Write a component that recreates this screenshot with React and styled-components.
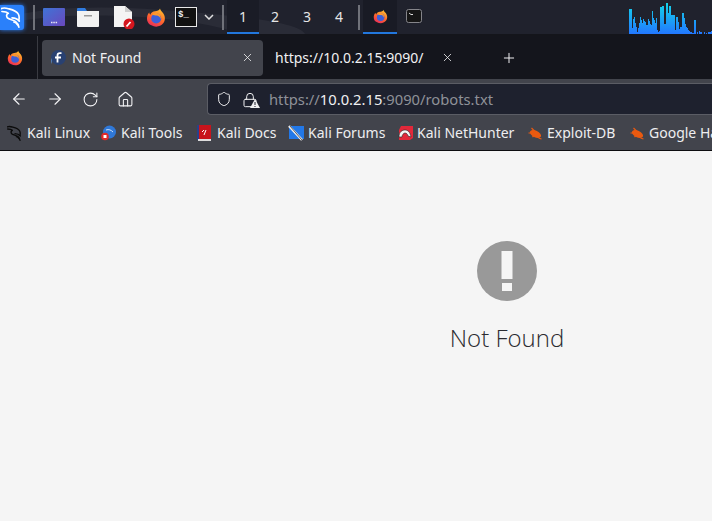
import styled, { createGlobalStyle } from 'styled-components';
import { ArrowLeft, ArrowRight, RotateCw, House, Shield, Lock, X, Plus } from 'lucide-react';

const GlobalStyle = createGlobalStyle`
  html, body {
    margin: 0;
    padding: 0;
    height: 100%;
    overflow: hidden;
    background: #f5f5f5;
  }
  #root { height: 100%; }
`;

const Screen = styled.div`
  width: 712px;
  height: 521px;
  display: flex;
  flex-direction: column;
  overflow: hidden;
  font-family: "Noto Sans", "Open Sans", sans-serif;
`;

/* ---- desktop panel ---- */
const Panel = styled.div`
  position: relative;
  flex: none;
  height: 34px;
  display: flex;
  align-items: center;
  background: #20222d;
  border-bottom: 2px solid #14151b;
`;

const Swoosh = styled.svg`
  position: absolute;
  left: 0;
  top: 0;
  pointer-events: none;
`;

const PanelItems = styled.div`
  position: relative;
  display: flex;
  align-items: center;
  height: 100%;
  width: 100%;
`;

const StartButton = styled.div`
  width: 24px;
  height: 25px;
  margin: 0 8px 0 0;
  display: flex;
  align-items: center;
  justify-content: center;
  border-radius: 0 3px 3px 0;
  background: #2a80fa;
  box-shadow: 0 0 4px #2a80fa;
`;

const Separator = styled.div`
  flex: none;
  width: 2px;
  height: 25px;
  margin: ${p => p.$margin};
  background: #70727a;
`;

const Launcher = styled.div`
  flex: none;
  width: ${p => p.$w}px;
  margin-left: ${p => p.$ml}px;
  display: flex;
  justify-content: center;
`;

const Desk = styled.div`
  flex: none;
  width: 32px;
  height: 34px;
  box-sizing: border-box;
  display: flex;
  align-items: center;
  justify-content: center;
  font-size: 14px;
  color: #e6e6e6;
  background: ${p => (p.$active ? '#1a1c26' : 'transparent')};
  border-bottom: 2px solid ${p => (p.$active ? '#2277dd' : 'transparent')};
`;

const TaskButton = styled.div`
  flex: none;
  width: ${p => p.$w}px;
  height: 34px;
  box-sizing: border-box;
  display: flex;
  align-items: center;
  justify-content: center;
  background: ${p => (p.$active ? '#191b25' : 'transparent')};
  border-bottom: 2px solid ${p => (p.$active ? '#2277dd' : 'transparent')};
`;

const Graph = styled.svg`
  position: absolute;
  right: 0;
  bottom: 0;
`;

/* ---- browser ---- */
const TabStrip = styled.div`
  position: relative;
  flex: none;
  height: 43px;
  display: flex;
  align-items: center;
  background: #14151c;
`;

const AppMenu = styled.div`
  flex: none;
  width: 30px;
  height: 100%;
  padding-left: 7px;
  display: flex;
  align-items: center;
  border-right: 1px solid #3a3b42;
`;

const Tab = styled.div`
  flex: none;
  width: ${p => p.$w}px;
  height: 36px;
  margin-left: ${p => p.$ml}px;
  box-sizing: border-box;
  padding: 0 9px 0 ${p => p.$pl}px;
  display: flex;
  align-items: center;
  border-radius: 4px;
  background: ${p => (p.$active ? '#42444c' : 'transparent')};
  color: #f0f0f2;
  font-size: 14px;
`;

const TabTitle = styled.span`
  flex: 1;
  margin-left: ${p => p.$ml}px;
  white-space: nowrap;
`;

const NewTab = styled.div`
  flex: none;
  margin-left: 32px;
  width: 28px;
  display: flex;
  justify-content: center;
  color: #f0f0f2;
`;

const NavBar = styled.div`
  flex: none;
  height: 36px;
  display: flex;
  align-items: flex-end;
  background: #42444c;
`;

const NavButtons = styled.div`
  flex: none;
  width: 207px;
  height: 32px;
  box-sizing: border-box;
  padding-left: 10px;
  display: flex;
  gap: 18px;
  align-items: center;
  color: #f4f4f6;
`;

const UrlBar = styled.div`
  flex: 1;
  height: 32px;
  box-sizing: border-box;
  display: flex;
  align-items: center;
  padding-left: 8px;
  border: 1px solid #5b5d65;
  border-right: none;
  border-radius: 4px 0 0 4px;
  background: #1e212e;
  color: #f0f0f2;
`;

const SecurityIcons = styled.div`
  display: flex;
  align-items: center;
  gap: 10px;
  margin-right: 11px;
`;

const LockWrap = styled.div`
  position: relative;
  width: 16px;
  height: 16px;
`;

const Warn = styled.svg`
  position: absolute;
  right: -2px;
  bottom: -1px;
`;

const UrlText = styled.span`
  font-size: 14.75px;
  color: #8f9198;
  white-space: nowrap;
`;

const UrlHost = styled.span`
  color: #f0f0f2;
`;

const Bookmarks = styled.div`
  flex: none;
  height: 35px;
  display: flex;
  align-items: center;
  padding-left: 7px;
  background: #42444c;
  border-bottom: 1px solid #0d0d10;
  white-space: nowrap;
  overflow: hidden;
`;

const Bookmark = styled.div`
  flex: none;
  width: ${p => p.$w}px;
  display: flex;
  align-items: center;
  gap: 4px;
  font-size: 14px;
  color: #eeeef0;
`;

const Content = styled.div`
  flex: 1;
  width: 1014px;
  background: #f5f5f5;
  display: flex;
  flex-direction: column;
  align-items: center;
  padding-top: 90px;
`;

const Message = styled.div`
  margin-top: 21px;
  font-family: "Open Sans", "Noto Sans", sans-serif;
  font-weight: 300;
  font-size: 24px;
  line-height: 32px;
  color: #2b2b30;
`;

/* ---- drawn icons ---- */
const Firefox = ({ size = 20 }) => (
  <svg width={size} height={size} viewBox="0 0 20 20">
    <defs>
      <linearGradient id="ffBody" x1="0.7" y1="0" x2="0.2" y2="1">
        <stop offset="0" stopColor="#ffc02e" />
        <stop offset="0.5" stopColor="#ff6a2a" />
        <stop offset="1" stopColor="#e8265e" />
      </linearGradient>
    </defs>
    <path d="M14 1c.4 1.8 1.5 2.6 3 4.4 2.4 3 2.6 7.4.2 10.4-2.8 3.6-8 4.3-11.8 2C2 16.600.4 12.800 1.200 9 1.500 7.400 2.300 6 3.300 5c0 1 .4 1.700 1 2.200C5 5 7 4 9 3.800 11 3.500 13.500 3 14 1z" fill="url(#ffBody)" />
    <circle cx="10.200" cy="11" r="5" fill="#3d5fd8" />
    <path d="M6 6.500c2-1.500 5-1.500 7 .2 1.500 1.300 2 3 1.600 5-.4-2-1.700-3.400-3.600-3.700-1.500-.2-3.500.2-5-1.500z" fill="#ff9a2a" />
  </svg>
);

const KaliDragon = ({ size = 20, color = '#fff', width = 1.8 }) => (
  <svg width={size} height={size} viewBox="0 0 24 24" fill="none" stroke={color} strokeWidth={width} strokeLinecap="round" strokeLinejoin="round">
    <path d="M0 3c2-1 5-1 8 0 4 1 9 2 11 6 1 2 1 4 .5 6" />
    <path d="M1 6c2 0 5 0 7 2-2 1-2.500 3-1 5 2 2 6 2 9 4 2 1.500 3 3.500 3.500 6" />
    <path d="M12 13c3 0 6 1 8 3.500" />
    <path d="M14 17.500c2 .5 3 1.500 4 3" />
  </svg>
);

const BugIcon = () => (
  <svg width="16" height="16" viewBox="0 0 15 16">
    <ellipse cx="8" cy="9" rx="6" ry="3.300" transform="rotate(25 8 9)" fill="#ea5a10" />
    <path d="M1 8h5M4 3l4 4M11 13l3 1M5 12l2-2" stroke="#ea5a10" strokeWidth="1.200" />
  </svg>
);

const BARS = [25,25,25,6,15,17,11,7,2,6,11,17,14,11,15,13,12,9,9,15,13,10,9,23,16,14,11,16,4,2,3,27,27,28,28,10,10,31,31,21,28,28,19,19,19,19,4,17,17,12,5,7,7,21,21,16,10,7,6,4,3,2,2,1,1,14,14,0,2,0,3,2,2,0,0,2,0,1,0,2,2,2,3];

export default function App() {
  return (
    <Screen>
      <GlobalStyle />
      <Panel>
        <Swoosh width="712" height="34">
          <path d="M0 18 C60 4 120 6 190 12 S300 24 305 34 L240 34 C220 26 180 18 120 16 S40 18 0 24z" fill="#2a2c37" />
        </Swoosh>
        <PanelItems>
          <StartButton>
            <KaliDragon size={22} />
          </StartButton>
          <Separator $margin="0 0 0 1px" />
          <Launcher $w={22} $ml={8}>
            <svg width="22" height="18" viewBox="0 0 22 18">
              <defs>
                <linearGradient id="deskBg" x1="0" y1="0" x2="1" y2="1">
                  <stop offset="0" stopColor="#3f74d6" />
                  <stop offset="1" stopColor="#6a48bd" />
                </linearGradient>
              </defs>
              <rect width="22" height="18" rx="1" fill="url(#deskBg)" />
              <path d="M8 14.500h1.500M10.300 14.500h1.500M12.600 14.500h1.500" stroke="#e8e8f4" strokeWidth="1.500" />
            </svg>
          </Launcher>
          <Launcher $w={22} $ml={12}>
            <svg width="22" height="20" viewBox="0 0 22 20">
              <path d="M0 2q0-1 1-1h7l2 3H0z" fill="#2f7be0" />
              <path d="M0 4h22v15q0 1-1 1H1q-1 0-1-1z" fill="#f2f2f2" />
              <rect x="7" y="8" width="8" height="1.500" fill="#9a9a9a" />
            </svg>
          </Launcher>
          <Launcher $w={22} $ml={14}>
            <svg width="22" height="23" viewBox="0 0 22 23">
              <path d="M1 0h11l7 6v15H1z" fill="#f4f4f4" />
              <path d="M12 0l7 6h-7z" fill="#cfcfcf" />
              <circle cx="16" cy="18" r="5.500" fill="#d4161e" />
              <path d="M13.500 20.500l4-4.500" stroke="#fff" strokeWidth="1.800" />
            </svg>
          </Launcher>
          <Launcher $w={20} $ml={11}>
            <Firefox size={21} />
          </Launcher>
          <Launcher $w={22} $ml={9}>
            <svg width="22" height="20" viewBox="0 0 22 20">
              <rect x="0.500" y="0.500" width="21" height="19" fill="#111" stroke="#e8e8e8" />
              <text x="3" y="10" fontSize="9" fontWeight="700" fontFamily="Liberation Mono, monospace" fill="#eee">$_</text>
            </svg>
          </Launcher>
          <Launcher $w={12} $ml={6}>
            <svg width="10" height="6" viewBox="0 0 10 6" fill="none" stroke="#e0e0e0" strokeWidth="1.500">
              <path d="M1 1l4 4 4-4" />
            </svg>
          </Launcher>
          <Separator $margin="0 3px 0 7px" />
          <Desk $active>1</Desk>
          <Desk>2</Desk>
          <Desk>3</Desk>
          <Desk>4</Desk>
          <Separator $margin="0 3px 0 3px" />
          <TaskButton $active $w={34}>
            <Firefox size={15} />
          </TaskButton>
          <TaskButton $w={34}>
            <svg width="16" height="14" viewBox="0 0 16 14">
              <rect x="0.500" y="0.500" width="15" height="13" rx="2" fill="#161616" stroke="#85858a" />
              <path d="M3 4l2 1.500h2" stroke="#ddd" fill="none" />
            </svg>
          </TaskButton>
        </PanelItems>
        <Graph width="83" height="34" viewBox="0 0 83 34">
          <defs>
            <linearGradient id="barFill" gradientUnits="userSpaceOnUse" x1="0" y1="34" x2="0" y2="4">
              <stop offset="0" stopColor="#2277ff" />
              <stop offset="1" stopColor="#14d2ea" />
            </linearGradient>
          </defs>
          {BARS.map((h, i) => (
            <rect key={i} x={i} y={34 - h} width="1" height={h} fill="url(#barFill)" />
          ))}
        </Graph>
      </Panel>

      <TabStrip>
        <AppMenu>
          <Firefox size={16} />
        </AppMenu>
        <Tab $active $w={221} $ml={4} $pl={9}>
          <svg width="15" height="15" viewBox="0 0 15 15">
            <circle cx="7.500" cy="7.500" r="7.500" fill="#294172" />
            <path d="M1 14l0-6a6.500 6.500 0 0 0 0 6z" fill="#5a8fd0" />
            <path d="M6.500 12.500V5.500q0-2.300 2.500-2.300h1.500M4 7.500h6" stroke="#fff" strokeWidth="1.800" fill="none" />
          </svg>
          <TabTitle $ml={6}>Not Found</TabTitle>
          <X size={13} strokeWidth={1.500} />
        </Tab>
        <Tab $w={200} $ml={0} $pl={12}>
          <TabTitle $ml={0}>https://10.0.2.15:9090/</TabTitle>
          <X size={13} strokeWidth={1.500} />
        </Tab>
        <NewTab>
          <Plus size={16} strokeWidth={1.500} />
        </NewTab>
      </TabStrip>

      <NavBar>
        <NavButtons>
          <ArrowLeft size={18} strokeWidth={1.500} />
          <ArrowRight size={18} strokeWidth={1.500} />
          <RotateCw size={17} strokeWidth={1.500} />
          <House size={17} strokeWidth={1.500} />
        </NavButtons>
        <UrlBar>
          <SecurityIcons>
            <Shield size={16} strokeWidth={1.500} />
            <LockWrap>
              <Lock size={16} strokeWidth={1.500} />
              <Warn width="10" height="9" viewBox="0 0 10 9">
                <path d="M5 0l5 9H0z" fill="#f0f0f2" />
                <path d="M5 3v3M5 7v1" stroke="#1e212e" />
              </Warn>
            </LockWrap>
          </SecurityIcons>
          <UrlText>
            https://<UrlHost>10.0.2.15</UrlHost>:9090/robots.txt
          </UrlText>
        </UrlBar>
      </NavBar>

      <Bookmarks>
        <Bookmark $w={94}>
          <KaliDragon size={16} color="#0c0c0c" width={2} />
          Kali Linux
        </Bookmark>
        <Bookmark $w={96}>
          <svg width="16" height="16" viewBox="0 0 16 16">
            <circle cx="8.500" cy="7" r="6.500" fill="#2f78d8" />
            <path d="M5 5c3-1 5 0 7 2" stroke="#cfe2f8" fill="none" />
            <circle cx="4" cy="11.500" r="3.800" fill="#e02a2a" />
            <rect x="2.500" y="10" width="3" height="3" fill="#fff" />
          </svg>
          Kali Tools
        </Bookmark>
        <Bookmark $w={91}>
          <svg width="16" height="16" viewBox="0 0 16 16">
            <rect x="0" y="0" width="14" height="14" fill="#c8141c" />
            <rect x="0" y="0" width="2" height="15" fill="#27408b" />
            <rect x="1" y="14" width="13" height="2" fill="#ddd" />
            <path d="M5 7l2-2M9 5l-2 5" stroke="#fff" />
          </svg>
          Kali Docs
        </Bookmark>
        <Bookmark $w={109}>
          <svg width="16" height="16" viewBox="0 0 16 16">
            <rect x="1" y="1" width="15" height="13" fill="#2278e8" />
            <path d="M1 1l13 14" stroke="#f0f0f0" strokeWidth="2.500" />
            <path d="M2 1l12 14" stroke="#222" strokeWidth="0.700" />
          </svg>
          Kali Forums
        </Bookmark>
        <Bookmark $w={130}>
          <svg width="16" height="16" viewBox="0 0 16 16">
            <path d="M4 1h12v12l-3 2H2V5z" fill="#e2283a" />
            <path d="M2 12c0-5 3-7 6-7s5 2 6 7l-3-1c-.5-2-1.500-3-3-3s-3 2-3 4z" fill="#f4f4f4" stroke="#222" strokeWidth="0.600" />
          </svg>
          Kali NetHunter
        </Bookmark>
        <Bookmark $w={102}>
          <BugIcon />
          Exploit-DB
        </Bookmark>
        <Bookmark $w={150}>
          <BugIcon />
          Google Hacking DB
        </Bookmark>
      </Bookmarks>

      <Content>
        <svg width="60" height="60" viewBox="0 0 60 60">
          <circle cx="30" cy="30" r="30" fill="#999999" />
          <rect x="24.500" y="10" width="11" height="28" fill="#f5f5f5" />
          <rect x="25" y="42" width="10" height="8" fill="#f5f5f5" />
        </svg>
        <Message>Not Found</Message>
      </Content>
    </Screen>
  );
}
